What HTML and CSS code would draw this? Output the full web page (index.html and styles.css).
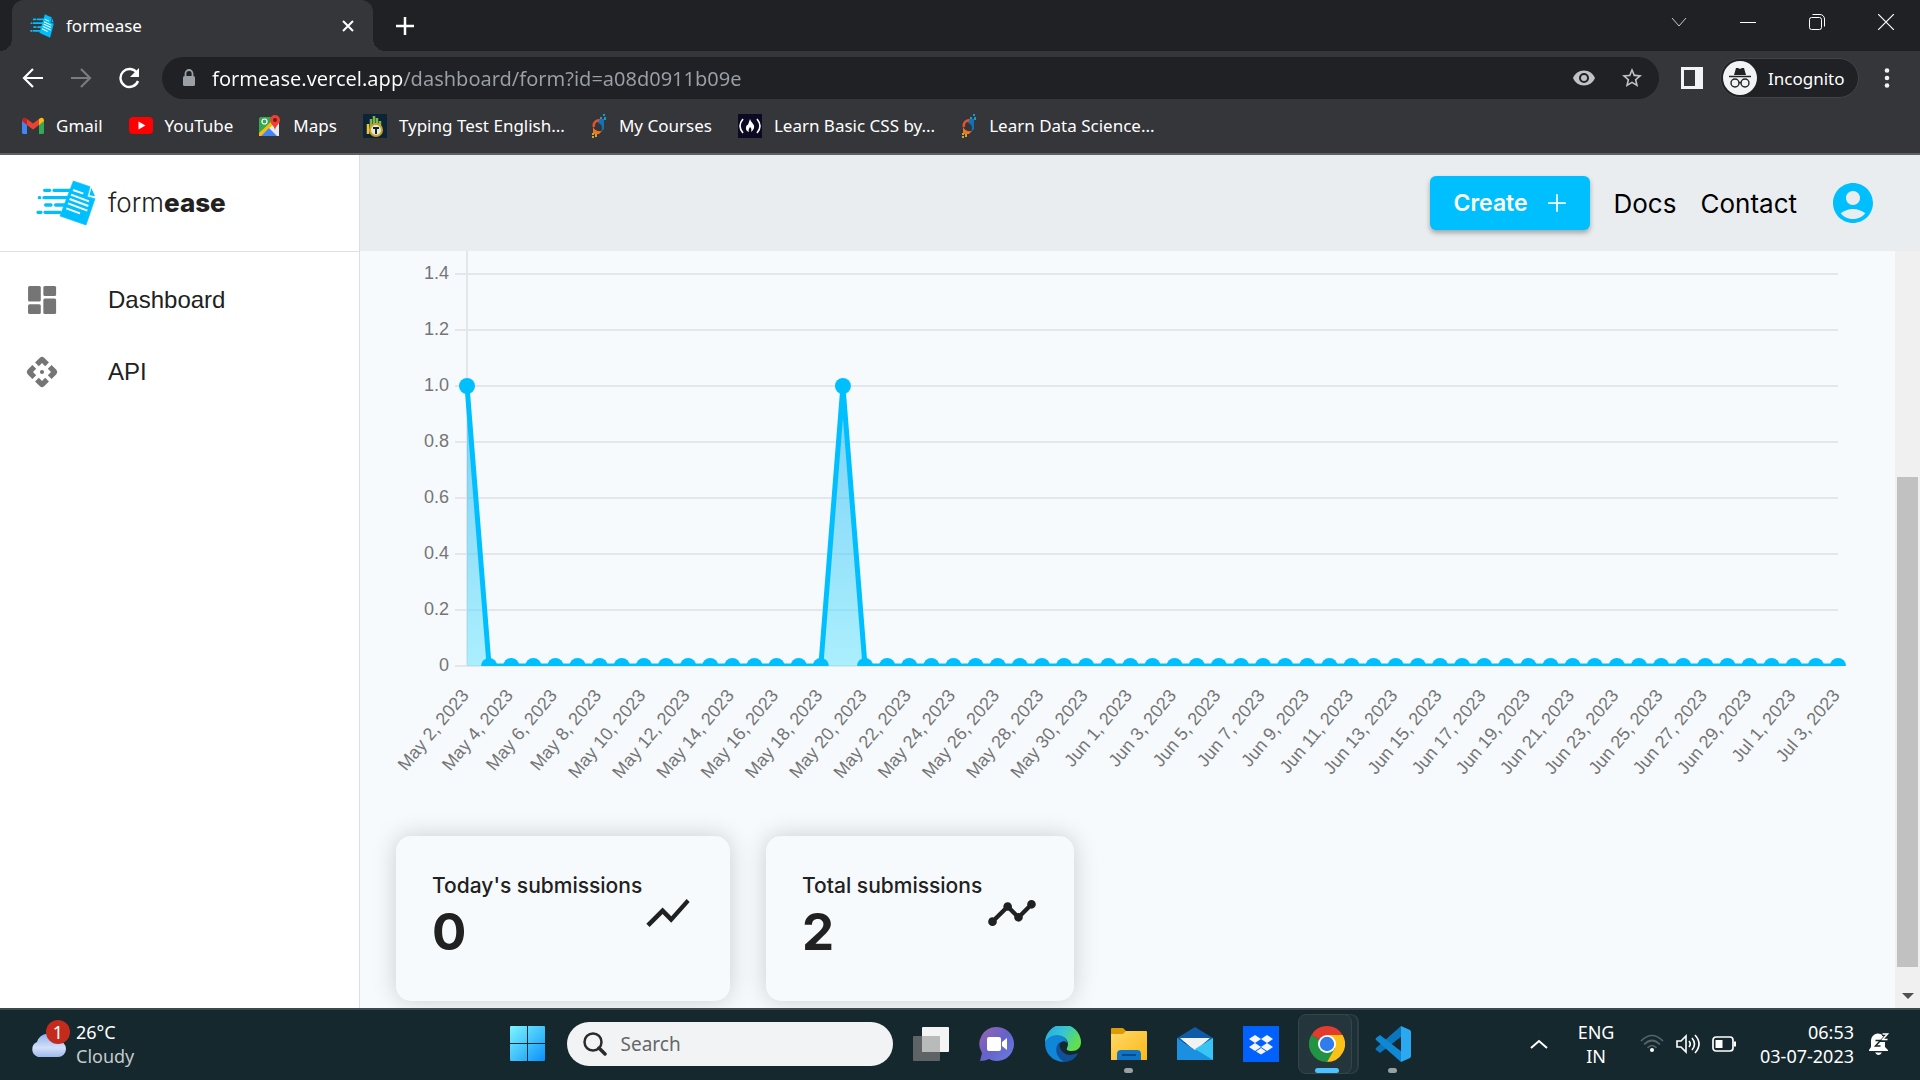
FILE: index.html
```
<!DOCTYPE html>
<html lang="en">
<head>
    <meta charset="UTF-8">
    <meta name="viewport" content="width=device-width, initial-scale=1.0">
    <title>formease</title>
    <link rel="stylesheet" href="styles.css">
</head>
<body>
    <!-- shared icons -->
    <svg class="defs" aria-hidden="true">
        <g id="logo">
            <path d="M220 93 270 110 262 140 285 146 258 225 180 198Z" fill="#00bfff" stroke="#00bfff" stroke-width="2" stroke-linejoin="round"/>
            <path d="M274 114 285 139 268 136Z" fill="#00bfff"/>
            <path d="M219 120l31 11M213 134l54 20M209 147l56 21M204 160l58 22M199 175l41 15" stroke="#fff" stroke-width="6"/>
            <path d="M134 121h15M162 121h48M118 143h1M132 143h72M137 165h16M167 165h30M114 187h9M135 187h45" stroke="#00bfff" stroke-width="10" stroke-linecap="round"/>
        </g>
        <symbol id="pi-logo" viewBox="0 0 16 24">
            <path d="M3 13a5 5 0 0 1 7-6" fill="none" stroke="#e5532d" stroke-width="2.5"/>
            <path d="M9 5h4v10l-3 3c2-5 1-8-3-9z" fill="#1272b6"/>
            <path d="M2 13c2 4 6 5 9 4l-3 3H2z" fill="#ee7623"/>
            <path d="M12 0h2v2h-2zM9 3h2v2H9zM13 3h2v3h-2z" fill="#1b9cc4"/>
            <path d="M1 19h2v2H1zM4 20h2v3H4zM1 22h2v2H1z" fill="#d9a520"/>
        </symbol>
    </svg>

    <header class="browser">
        <div class="tab-strip">
            <div class="tab">
                <svg class="tab-icon" viewBox="108 90 180 138" preserveAspectRatio="none"><use href="#logo"/></svg>
                <span>formease</span>
                <button class="tab-close" aria-label="Close tab"><svg width="12" height="12" viewBox="0 0 12 12"><path d="M1 1l10 10M11 1 1 11" stroke="#fff" stroke-width="2"/></svg></button>
            </div>
            <button class="new-tab" aria-label="New tab"><svg width="18" height="18" viewBox="0 0 18 18"><path d="M9 0v18M0 9h18" stroke="#fff" stroke-width="2.5"/></svg></button>
            <div class="window-buttons">
                <button aria-label="Search tabs"><svg width="16" height="16" viewBox="0 0 16 16"><path d="M1 4l7 8 7-8" fill="none" stroke="#ccc"/></svg></button>
                <button aria-label="Minimize"><svg width="16" height="16" viewBox="0 0 16 16"><path d="M0 8.5h16" stroke="#fff"/></svg></button>
                <button aria-label="Restore"><svg width="16" height="16" viewBox="0 0 16 16"><g fill="none" stroke="#fff"><rect x=".5" y="3.500" width="12" height="12" rx="2"/><path d="M3.500 .5H11a4.500 4.500 0 0 1 4.500 4.500v7.500"/></g></svg></button>
                <button aria-label="Close"><svg width="16" height="16" viewBox="0 0 16 16"><path d="M0 0l16 16M16 0 0 16" stroke="#fff" stroke-width="1.200"/></svg></button>
            </div>
        </div>

        <div class="toolbar">
            <div class="nav-buttons">
                <button aria-label="Back"><svg width="22" height="22" viewBox="0 0 22 22"><path d="M21 11H2M11 2 2 11l9 9" fill="none" stroke="#fff" stroke-width="2.200"/></svg></button>
                <button aria-label="Forward"><svg width="22" height="22" viewBox="0 0 22 22"><path d="M1 11h19M11 2l9 9-9 9" fill="none" stroke="#7b7c7f" stroke-width="2.200"/></svg></button>
                <button aria-label="Reload"><svg width="22" height="22" viewBox="0 0 22 22"><path d="M19 6A9 9 0 1 0 20 14" fill="none" stroke="#fff" stroke-width="2.400"/><path d="M21 1v9h-9z" fill="#fff"/></svg></button>
            </div>
            <div class="address">
                <svg width="14" height="18" viewBox="0 0 14 18"><rect x="1" y="7" width="12" height="10" rx="1.500" fill="#9aa0a6"/><path d="M3.500 8V4.500a3.500 3.500 0 0 1 7 0V8" fill="none" stroke="#9aa0a6" stroke-width="1.800"/></svg>
                <input class="url" type="text" aria-label="Address" value="formease.vercel.app/dashboard/form?id=a08d0911b09e">
                <button aria-label="Tracking protection"><svg width="24" height="24" viewBox="0 0 24 24"><path fill="#c1c2c4" fill-rule="evenodd" d="M12 4.500C7 4.500 2.730 7.610 1 12c1.730 4.390 6 7.500 11 7.500s9.270-3.110 11-7.500c-1.730-4.390-6-7.500-11-7.500zM12 17a5 5 0 1 1 0-10 5 5 0 0 1 0 10zm0-8a3 3 0 1 0 0 6 3 3 0 0 0 0-6z"/></svg></button>
                <button aria-label="Bookmark"><svg width="24" height="24" viewBox="0 0 24 24"><path fill="#c1c2c4" d="m22 9.240-7.190-.62L12 2 9.190 8.630 2 9.240l5.460 4.730L5.820 21 12 17.270 18.180 21l-1.630-7.030L22 9.240zM12 15.400l-3.760 2.270 1-4.280-3.320-2.880 4.380-.38L12 6.100l1.710 4.040 4.380.38-3.320 2.880 1 4.280L12 15.400z"/></svg></button>
            </div>
            <button class="side-panel" aria-label="Side panel"><svg width="22" height="22" viewBox="0 0 22 22"><path fill="#f1f3f4" fill-rule="evenodd" d="M0 0h22v22H0zM3 3v16h11V3z"/></svg></button>
            <button class="incognito">
                <svg width="34" height="34" viewBox="0 0 34 34"><circle cx="17" cy="17" r="17" fill="#f1f3f4"/><path d="M11 14l2-7h2l2 1 2-1h2l2 7z" fill="#202124"/><path d="M6 15.500h22" stroke="#202124" stroke-width="1.500"/><g fill="none" stroke="#202124" stroke-width="1.400"><circle cx="12" cy="22" r="4"/><circle cx="22" cy="22" r="4"/><path d="M16 22q1-1 2 0"/></g></svg>
                Incognito
            </button>
            <button class="menu" aria-label="Menu"><svg width="6" height="20" viewBox="0 0 6 20"><g fill="#f1f3f4"><circle cx="3" cy="2.500" r="2.300"/><circle cx="3" cy="10" r="2.300"/><circle cx="3" cy="17.500" r="2.300"/></g></svg></button>
        </div>

        <nav class="bookmarks">
            <a href="#"><svg width="22" height="17" viewBox="0 0 22 17"><path d="M0 3v12.500Q0 17 1.500 17H5V7z" fill="#4285f4"/><path d="M17 7v10h3.500q1.500 0 1.500-1.500V3z" fill="#34a853"/><path d="M17 2v6l5-4V3q-1-4-5-1z" fill="#fbbc04"/><path d="M5 2v6L0 4V3q1-4 5-1z" fill="#c5221f"/><path d="M5 2l6 4.500L17 2v6l-6 4.500L5 8z" fill="#ea4335"/></svg>Gmail</a>
            <a href="#"><svg width="24" height="17" viewBox="0 0 24 17"><rect width="24" height="17" rx="4" fill="red"/><path d="M9.500 4.500v8l7-4z" fill="#fff"/></svg>YouTube</a>
            <a href="#"><svg width="22" height="22" viewBox="0 0 22 22"><rect y="2" width="20" height="19" rx="2" fill="#34a853"/><path d="M0 21 18 3h2v18z" fill="#e8eaed"/><path d="M0 18 15 4l3 2L2 21H0z" fill="#fbbc04"/><path d="M2 21l8-8 8 8z" fill="#4285f4"/><circle cx="5.500" cy="6.500" r="2.500" fill="none" stroke="#fff" stroke-width="1.200"/><path d="M16 0a5 5 0 0 0-5 5c0 4 4 5 5 10 1-5 5-6 5-10a5 5 0 0 0-5-5z" fill="#ea4335"/><circle cx="16" cy="5" r="2" fill="#811411"/></svg>Maps</a>
            <a href="#"><svg width="24" height="24" viewBox="0 0 24 24"><path fill="#0b2536" d="M0 0h24v24H0z"/><path d="M8 5v9M11 2v10M14 4v9M17 7v7" stroke="#7ab648" stroke-width="2.500"/><path d="M5 10v10" stroke="#f4c430" stroke-width="2.500"/><circle cx="13" cy="16" r="6" fill="#e5e8df" stroke="#c9a227" stroke-width="2"/><path d="M10 14h6M13 13v7" stroke="#14222c" stroke-width="2"/></svg>Typing Test English...</a>
            <a href="#"><svg width="16" height="24"><use href="#pi-logo"/></svg>My Courses</a>
            <a href="#"><svg width="24" height="24" viewBox="0 0 24 24"><path fill="#0a0a23" d="M0 0h24v24H0z"/><path d="M5 5q-6 7 0 14M19 5q6 7 0 14" fill="none" stroke="#fff" stroke-width="1.600"/><path d="M12 5c1 4 5 5 4 9-.5 2-2 3-3 4 1-3 0-4-1-5-1 2-2 3-1 5-3-1-4-4-2-7 1 1 2-3 3-6z" fill="#fff"/></svg>Learn Basic CSS by...</a>
            <a href="#"><svg width="16" height="24"><use href="#pi-logo"/></svg>Learn Data Science...</a>
        </nav>
    </header>

    <div class="app">
        <aside class="sidebar">
            <a class="brand" href="#">
                <svg class="brand-logo" viewBox="108 90 180 138"><use href="#logo"/></svg>
                <span class="brand-name">form<b>ease</b></span>
            </a>
            <nav class="side-nav">
                <a href="#"><svg width="36" height="36" viewBox="0 0 24 24" fill="#757575"><rect x="2.700" y="2.700" width="8.500" height="10.300" rx="1"/><rect x="12.900" y="2.700" width="8.500" height="6.600" rx="1"/><rect x="2.700" y="14.900" width="8.500" height="6.500" rx="1"/><rect x="12.900" y="11" width="8.500" height="10.400" rx="1"/></svg>Dashboard</a>
                <a href="#"><svg width="36" height="36" viewBox="0 0 24 24" fill="#757575"><circle cx="12" cy="12" r="1.400"/><path id="arm" d="M12 6l2.120 2.120 2.500-2.500-3.200-3.200q-1.420-1.200-2.840 0L7.380 5.620l2.500 2.500z"/><use href="#arm" transform="rotate(90 12 12)"/><use href="#arm" transform="rotate(180 12 12)"/><use href="#arm" transform="rotate(270 12 12)"/></svg>API</a>
            </nav>
        </aside>

        <div class="main">
            <header class="topbar">
                <button class="create">Create
                    <svg width="30" height="30" viewBox="0 0 24 24"><path fill="#fff" d="M19 12.700h-6.300V19h-1.400v-6.300H5v-1.400h6.300V5h1.400v6.300H19z"/></svg>
                </button>
                <a href="#">Docs</a>
                <a href="#">Contact</a>
                <button class="account" aria-label="Account"><svg width="48" height="48" viewBox="0 0 24 24"><path fill="#00bfff" d="M12 2C6.480 2 2 6.480 2 12s4.480 10 10 10 10-4.480 10-10S17.520 2 12 2zm0 4c1.930 0 3.500 1.570 3.500 3.500S13.930 13 12 13s-3.500-1.570-3.500-3.500S10.070 6 12 6zm0 14c-2.030 0-4.430-.82-6.140-2.880C7.550 15.800 9.680 15 12 15s4.450.8 6.140 2.120C16.430 19.180 14.030 20 12 20z"/></svg></button>
            </header>

            <div class="scroll-area">
                <main class="content">
                    <svg id="chart" class="chart" viewBox="0 0 1535 561" role="img" aria-label="Submissions per day">
                        <defs>
                            <linearGradient id="fill" gradientUnits="userSpaceOnUse" x1="0" y1="135" x2="0" y2="415">
                                <stop offset="0" stop-color="#00a8ee"/>
                                <stop offset="1" stop-color="#60e4ff"/>
                            </linearGradient>
                            <clipPath id="plot"><path d="M90 0h1400v415H90z"/></clipPath>
                        </defs>
                    </svg>

                    <section class="cards">
                        <article class="card">
                            <div>
                                <h2>Today's submissions</h2>
                                <p>0</p>
                            </div>
                            <svg width="52" height="52" viewBox="0 0 24 24"><path fill="#212121" d="m3.500 18.490 6-6.010 4 4L22 6.920l-1.410-1.410-7.090 7.970-4-4L2 16.990z"/></svg>
                        </article>
                        <article class="card card-total">
                            <div>
                                <h2>Total submissions</h2>
                                <p>2</p>
                            </div>
                            <svg width="52" height="52" viewBox="0 0 24 24"><path fill="#212121" d="M23 8c0 1.100-.9 2-2 2-.18 0-.35-.02-.51-.07l-3.560 3.550c.05.16.07.34.07.52 0 1.100-.9 2-2 2s-2-.9-2-2c0-.18.02-.36.07-.52l-2.550-2.550c-.16.05-.34.07-.52.07s-.36-.02-.52-.07l-4.550 4.560c.05.16.07.33.07.51 0 1.100-.9 2-2 2s-2-.9-2-2 .9-2 2-2c.18 0 .35.02.51.07l4.560-4.550C8.020 9.360 8 9.180 8 9c0-1.100.9-2 2-2s2 .9 2 2c0 .18-.02.36-.07.52l2.550 2.550c.16-.05.34-.07.52-.07s.36.02.52.07l3.550-3.560C19.020 8.350 19 8.180 19 8c0-1.100.9-2 2-2s2 .9 2 2z"/></svg>
                        </article>
                    </section>
                </main>
                <div class="scrollbar">
                    <div class="thumb"></div>
                    <svg width="12" height="6" viewBox="0 0 12 6"><path d="M0 0h12L6 6z" fill="#505050"/></svg>
                </div>
            </div>
        </div>
    </div>

    <footer class="taskbar">
        <button class="weather">
            <span class="weather-icon">
                <svg width="36" height="25" viewBox="0 0 36 25"><defs><linearGradient id="cloud" x1="0" y1="0" x2="0" y2="1"><stop offset="0" stop-color="#8db0ee"/><stop offset=".6" stop-color="#d3e0f8"/><stop offset="1" stop-color="#9db9ec"/></linearGradient></defs><path d="M8 25a8 8 0 0 1-1-15A11 11 0 0 1 28 9a8 8 0 0 1 0 16z" fill="url(#cloud)"/></svg>
                <span class="badge">1</span>
            </span>
            <span class="lines"><span>26°C</span><span class="dim">Cloudy</span></span>
        </button>

        <div class="apps">
            <button class="app-button" aria-label="Start"><svg width="36" height="36" viewBox="0 0 36 36"><defs><linearGradient id="win" x1="0" y1="0" x2="1" y2="1"><stop offset="0" stop-color="#7df5ff"/><stop offset=".5" stop-color="#44c4fb"/><stop offset="1" stop-color="#0a90fb"/></linearGradient></defs><path fill="url(#win)" d="M1 0h16v17H0V1q0-1 1-1zM18 0h16q1 0 1 1v16H18zM0 18h17v17H1q-1 0-1-1zM18 18h17v16q0 1-1 1H18z"/></svg></button>
            <label class="search">
                <svg width="24" height="24" viewBox="0 0 24 24" fill="none" stroke="#2b2b2b"><circle cx="10" cy="10" r="8.500" stroke-width="2.500"/><path d="M16 16l6 6" stroke-width="3.500" stroke-linecap="round"/></svg>
                <input type="text" placeholder="Search" aria-label="Search">
            </label>
            <button class="app-button" aria-label="Task view"><svg width="36" height="34" viewBox="0 0 36 34"><rect x="9" width="27" height="25" rx="1" fill="#f4f4f4"/><rect y="9" width="27" height="25" rx="1" fill="#5e6365"/><path d="M9 9h18v16H9z" fill="#b9bbbb"/></svg></button>
            <button class="app-button" aria-label="Chat"><svg width="36" height="36" viewBox="0 0 36 36"><defs><linearGradient id="chat" x1="0" y1="0" x2="1" y2="1"><stop offset="0" stop-color="#9c64ae"/><stop offset=".5" stop-color="#6562c9"/><stop offset="1" stop-color="#6a7fe0"/></linearGradient></defs><path d="M18 1a17 17 0 1 1-8 32q-4 2-9 2l2-8A17 17 0 0 1 18 1z" fill="url(#chat)"/><rect x="8" y="11" width="14" height="14" rx="2" fill="#fff"/><path d="M23 16l5-4v12l-5-4z" fill="#fff"/></svg></button>
            <button class="app-button" aria-label="Edge"><svg width="36" height="36" viewBox="0 0 36 36"><defs><linearGradient id="edge-top" x1="0" y1="0" x2="1" y2=".5"><stop offset="0" stop-color="#27a6de"/><stop offset=".5" stop-color="#35c4d6"/><stop offset="1" stop-color="#62e04c"/></linearGradient></defs><path d="M0 17a18 18 0 0 1 36-1c0 6-4 9-9 9-4 0-6-1-5-3 3-5-1-12-8-12S2 13 0 17z" fill="url(#edge-top)"/><path d="M0 18c1-6 7-9 12-9 6 0 10 4 10 8-2-3-6-2-8 1-4 7 1 15 9 17A18 18 0 0 1 0 18z" fill="#0f86d8"/><path d="M15 16c-6 4-5 15 4 20 7 0 12-4 14-9-5 2-10 3-14 0-4-3-5-7-4-11z" fill="#114f97"/></svg></button>
            <button class="app-button running" aria-label="File Explorer"><svg width="36" height="36" viewBox="0 0 36 36"><defs><linearGradient id="folder" x1="0" y1="0" x2="1" y2="1"><stop offset="0" stop-color="#ffd968"/><stop offset="1" stop-color="#fbb917"/></linearGradient></defs><path d="M1 2h11l3 3v5H0V3q0-1 1-1z" fill="#dd9a05"/><path d="M0 8h12l3-3h20q1 0 1 1v28H0z" fill="url(#folder)"/><path d="M6 34V28q0-4 4-4h16q4 0 4 4v6z" fill="#0f74c5"/><path d="M11 29h14" stroke="#0a4a86" stroke-width="2"/></svg></button>
            <button class="app-button" aria-label="Mail"><svg width="36" height="36" viewBox="0 0 36 36"><path d="M0 12 18 1l18 11v4H0z" fill="#0f5ba8"/><path d="M3 12h30L18 25z" fill="#f2f2f2"/><path d="M0 12l18 12 18-12v22H0z" fill="#1c90e0"/><path d="M4 12h28L18 23z" fill="#f2f2f2"/><path d="M36 12v22L18 23z" fill="#37c6f4"/></svg></button>
            <button class="app-button" aria-label="Dropbox"><svg width="36" height="36" viewBox="0 0 36 36"><path fill="#0061ff" d="M0 0h36v36H0z"/><path fill="#f7f5f2" d="M12 9l6 4-6 4-6-4zM24 9l6 4-6 4-6-4zM12 17l6 4-6 4-6-4zM24 17l6 4-6 4-6-4zM18 22l5 3.500-5 3-5-3z"/></svg></button>
            <button class="app-button active" aria-label="Chrome"><svg width="36" height="36" viewBox="0 0 36 36"><path d="M18 18 2.400 9a18 18 0 0 1 31.200 0z" fill="#e33b2e"/><path d="M18 18 2.400 9A18 18 0 0 0 18 36l8-13z" fill="#229342"/><path d="M18 9h15.600A18 18 0 0 1 18 36l8-14z" fill="#fbc116"/><circle cx="18" cy="18" r="9" fill="#fff"/><circle cx="18" cy="18" r="7.200" fill="#2f7ced"/></svg></button>
            <button class="app-button running" aria-label="Visual Studio Code"><svg width="36" height="36" viewBox="0 0 36 36"><path d="M26 0l1 10L5 27l-4-3q-1-1 0-2z" fill="#0a76bd"/><path d="M1 12l4-3 22 17-1 10L1 14q-1-1 0-2z" fill="#1088d4"/><path d="M26 0l9 4q1 1 1 2v24q0 1-1 2l-9 4z" fill="#2ba9f0"/></svg></button>
        </div>

        <div class="tray">
            <button aria-label="Show hidden icons"><svg width="18" height="10" viewBox="0 0 18 10"><path d="M1 9l8-7 8 7" fill="none" stroke="#fff" stroke-width="2"/></svg></button>
            <button class="lines language"><span>ENG</span><span>IN</span></button>
            <button class="status" aria-label="Network, sound and battery">
                <svg width="24" height="20" viewBox="0 0 24 20" fill="none" stroke="#566468" stroke-width="1.700"><path d="M1 7q11-11 22 0M4 10.500q8-8 16 0M7.500 14q4.500-5 9 0"/><circle cx="12" cy="16" r="2" fill="#fff" stroke="none"/></svg>
                <svg width="24" height="20" viewBox="0 0 24 20" fill="none" stroke="#fff" stroke-width="1.600"><path d="M1 7h4l5-5v16l-5-5H1z"/><path d="M13 7q2.500 3 0 6M16 4q5 6 0 12M19 1q8 9 0 18"/></svg>
                <svg width="24" height="16" viewBox="0 0 24 16"><rect x="1" y="1" width="20" height="14" rx="3" fill="none" stroke="#fff" stroke-width="1.700"/><path d="M3.500 4h7v8h-7zM22 5.500h2v5h-2z" fill="#fff"/></svg>
            </button>
            <button class="lines clock"><span>06:53</span><span>03-07-2023</span></button>
            <button aria-label="Notifications"><svg width="22" height="24" viewBox="0 0 22 24"><path d="M1 18l2-3V9a7 7 0 0 1 14-1v7l3 3v1H1zM7 20.500h7q-3.500 5-7 0z" fill="#fff"/><path d="M14 2h6l-5 6h5" fill="none" stroke="#15282e" stroke-width="4"/><path d="M14.500 2h5l-5 5.500h5" fill="none" stroke="#fff" stroke-width="1.500"/><path d="M7.500 8.500h5l-5 5.500h5" fill="none" stroke="#15282e" stroke-width="1.500"/></svg></button>
        </div>
    </footer>

    <script>
        const chart = document.getElementById('chart');
        const LEFT = 107, RIGHT = 1478, BASE = 415, UNIT = 280;
        const start = new Date(2023, 4, 2);
        const submissions = new Array(63).fill(0);
        submissions[0] = 1;
        submissions[17] = 1;

        const step = (RIGHT - LEFT) / (submissions.length - 1);
        const px = i => LEFT + i * step;
        const py = v => BASE - v * UNIT;

        function add(tag, attrs, text) {
            const el = document.createElementNS('http://www.w3.org/2000/svg', tag);
            for (const key in attrs) el.setAttribute(key, attrs[key]);
            if (text !== undefined) el.textContent = text;
            chart.appendChild(el);
        }

        // y axis
        for (let i = 0; i <= 7; i++) {
            const y = py(i / 5);
            add('path', { class: 'grid', d: `M95 ${y}H${RIGHT}` });
            add('text', { class: 'tick', x: 89, y: y + 5 }, i === 0 ? '0' : (i / 5).toFixed(1));
        }
        add('path', { class: 'grid', d: `M${LEFT} 0V${BASE}` });

        // x axis, every second day
        for (let i = 0; i < submissions.length; i += 2) {
            const day = new Date(start);
            day.setDate(start.getDate() + i);
            const label = day.toLocaleDateString('en-US', { month: 'short', day: 'numeric', year: 'numeric' });
            add('text', { class: 'tick', transform: `translate(${px(i) - 2} 441) rotate(-50)`, y: 6 }, label);
        }

        // series
        const points = submissions.map((v, i) => `${px(i)} ${py(v)}`).join('L');
        add('path', { class: 'area', d: `M${points}L${RIGHT} ${BASE}L${LEFT} ${BASE}Z` });
        add('path', { class: 'line', d: `M${points}` });
        submissions.forEach((v, i) => add('circle', { class: 'dot', cx: px(i), cy: py(v), r: 8 }));
    </script>
</body>
</html>
```
FILE: styles.css
```
* {
    box-sizing: border-box;
}

body {
    margin: 0;
    height: 100vh;
    display: flex;
    flex-direction: column;
    overflow: hidden;
    font-family: "Noto Sans", "Open Sans", sans-serif;
    color: #212121;
}

a {
    color: inherit;
    text-decoration: none;
}

button {
    padding: 0;
    border: none;
    background: none;
    color: inherit;
    font: inherit;
    cursor: pointer;
}

svg {
    display: block;
    flex-shrink: 0;
}

.defs {
    position: absolute;
    width: 0;
    height: 0;
}

/* browser window */
.browser {
    background-color: #35363a;
    border-bottom: 2px solid #5f6064;
    color: #fff;
    font-size: 17px;
}

.tab-strip {
    display: flex;
    align-items: center;
    height: 51px;
    padding-left: 12px;
    background-color: #202124;
}

.tab {
    position: relative;
    display: flex;
    align-items: center;
    gap: 12px;
    width: 361px;
    height: 51px;
    padding: 0 19px 0 18px;
    background-color: #35363a;
    border-radius: 12px 12px 0 0;
}

.tab::before,
.tab::after {
    content: "";
    position: absolute;
    bottom: 0;
    width: 12px;
    height: 12px;
}

.tab::before {
    right: 100%;
    background: radial-gradient(circle at 0 0, #202124 12px, #35363a 12px);
}

.tab::after {
    left: 100%;
    background: radial-gradient(circle at 100% 0, #202124 12px, #35363a 12px);
}

.tab-icon {
    width: 24px;
    height: 24px;
}

.tab-close {
    margin-left: auto;
}

.new-tab {
    margin-left: 23px;
}

.window-buttons {
    display: flex;
    align-self: flex-start;
    margin-left: auto;
}

.window-buttons button {
    display: grid;
    place-items: center;
    width: 69px;
    height: 43px;
}

.toolbar {
    display: flex;
    align-items: center;
    height: 51px;
    padding: 3px 30px 0 22px;
}

.nav-buttons {
    display: flex;
    gap: 26px;
    margin-right: 22px;
}

.address {
    flex: 1;
    display: flex;
    align-items: center;
    gap: 24px;
    height: 42px;
    margin-right: 22px;
    padding: 0 15px 0 20px;
    background-color: #202124;
    border-radius: 21px;
}

.url {
    flex: 1;
    min-width: 0;
    margin-left: -8px;
    padding: 0;
    border: none;
    outline: none;
    font: 20px "Noto Sans", "Open Sans", sans-serif;
    background: linear-gradient(90deg, #fff 191px, #9aa0a6 191px);
    -webkit-background-clip: text;
    background-clip: text;
    color: transparent;
}

.side-panel {
    margin-right: 17px;
}

.incognito {
    display: flex;
    align-items: center;
    gap: 11px;
    height: 40px;
    width: 139px;
    margin-right: 25px;
    padding-left: 2px;
    background-color: #202124;
    border: 1px solid #424347;
    border-radius: 20px;
}

.bookmarks {
    display: flex;
    align-items: center;
    gap: 26px;
    height: 51px;
    padding: 0 22px 4px;
}

.bookmarks a {
    display: flex;
    align-items: center;
    gap: 12px;
}

/* formease page */
.app {
    flex: 1;
    min-height: 0;
    display: flex;
    font-family: "Liberation Sans", Arial, sans-serif;
}

.sidebar {
    width: 360px;
    border-right: 1px solid #dcdfe1;
    background-color: #fff;
}

.brand {
    display: flex;
    align-items: center;
    gap: 12px;
    height: 97px;
    padding-left: 36px;
    border-bottom: 1px solid #e0e0e0;
}

.brand-logo {
    width: 60px;
    height: 46px;
}

.brand-name {
    font: 300 26px/36px Inter, sans-serif;
}

.brand-name b {
    font-weight: 800;
}

.side-nav {
    padding-top: 12px;
    font-size: 24px;
}

.side-nav a {
    display: flex;
    align-items: center;
    gap: 48px;
    height: 72px;
    padding-left: 24px;
}

.main {
    flex: 1;
    min-width: 0;
    display: flex;
    flex-direction: column;
}

.topbar {
    display: flex;
    align-items: center;
    justify-content: flex-end;
    gap: 24px;
    height: 96px;
    padding-right: 43px;
    background-color: #e9edf0;
    color: #000;
    font: 26px Inter, sans-serif;
}

.create {
    display: flex;
    align-items: center;
    justify-content: space-between;
    width: 160px;
    height: 54px;
    padding: 0 18px 0 24px;
    border-radius: 6px;
    background-color: #00bfff;
    box-shadow: 0 3px 5px rgba(0, 0, 0, 0.3);
    color: #fff;
    font-size: 23px;
    font-weight: 600;
}

.account {
    margin-left: 8px;
}

.scroll-area {
    flex: 1;
    min-height: 0;
    display: flex;
}

.content {
    flex: 1;
    min-width: 0;
    overflow: hidden;
    background-color: #f6fafd;
}

.chart {
    width: 100%;
}

.grid {
    stroke: #e3e7e9;
    stroke-width: 2;
}

.tick {
    fill: #757575;
    font-size: 18px;
    text-anchor: end;
}

.area {
    fill: url(#fill);
    fill-opacity: 0.5;
}

.line {
    fill: none;
    stroke: #00bfff;
    stroke-width: 5;
    stroke-linejoin: round;
    clip-path: url(#plot);
}

.dot {
    fill: #00bfff;
    clip-path: url(#plot);
}

.cards {
    display: flex;
    gap: 36px;
    padding: 24px 36px;
}

.card {
    display: flex;
    justify-content: space-between;
    width: 334px;
    height: 165px;
    padding: 36px;
    border-radius: 15px;
    background-color: #f6fafd;
    box-shadow: 0 0 24px rgba(0, 0, 0, 0.18);
    font-family: Inter, sans-serif;
}

.card > div {
    width: 0;
}

.card-total {
    width: 308px;
}

.card svg {
    margin-top: 15px;
}

.card h2 {
    margin: 0;
    font-size: 21px;
    font-weight: 500;
    line-height: 28px;
    white-space: nowrap;
}

.card p {
    margin: 0;
    font-size: 51px;
    font-weight: 700;
    line-height: 64px;
}

.scrollbar {
    width: 25px;
    display: flex;
    flex-direction: column;
    align-items: center;
    justify-content: flex-end;
    gap: 26px;
    padding-bottom: 9px;
    background-color: #f0f0f0;
}

.thumb {
    width: 21px;
    height: 65.5%;
    background-color: #c1c1c1;
}

/* windows taskbar */
.taskbar {
    display: grid;
    grid-template-columns: 1fr auto 1fr;
    align-items: center;
    height: 72px;
    padding: 0 30px 2px;
    border-top: 2px solid #3c494c;
    background-color: #15282e;
    color: #fff;
    font-size: 18px;
}

.weather {
    display: flex;
    gap: 10px;
    justify-self: start;
    align-items: center;
    text-align: left;
}

.weather-icon {
    position: relative;
}

.badge {
    position: absolute;
    top: -12px;
    left: 16px;
    width: 24px;
    height: 24px;
    border-radius: 50%;
    background-color: #c42b1c;
    line-height: 24px;
    text-align: center;
}

.lines {
    display: flex;
    flex-direction: column;
    line-height: 24px;
}

.dim {
    color: #c5cacc;
}

.apps {
    display: flex;
    align-items: center;
}

.app-button {
    position: relative;
    display: grid;
    place-items: center;
    width: 66px;
    height: 60px;
}

.running::after,
.active::after {
    content: "";
    position: absolute;
    bottom: 1px;
    left: 50%;
    width: 9px;
    height: 5px;
    margin-left: -5px;
    border-radius: 3px;
    background-color: #98a0a2;
}

.active::after {
    width: 24px;
    margin-left: -12px;
    background-color: #4cc2ff;
}

.active::before {
    content: "";
    position: absolute;
    inset: 0 8px 0 4px;
    border: 1px solid #35464b;
    border-radius: 8px;
    background-color: #24363c;
    box-shadow: 6px 0 0 -1px #1d3036, 7px 0 0 #2c3d43;
}

.active svg {
    position: relative;
}

.search {
    display: flex;
    align-items: center;
    gap: 14px;
    width: 326px;
    height: 44px;
    margin: 0 5px 0 6px;
    padding: 0 16px;
    border-radius: 22px;
    background-color: #f1f3f4;
}

.search input {
    flex: 1;
    min-width: 0;
    padding: 0;
    border: none;
    outline: none;
    background: none;
    font: 19px "Noto Sans", "Open Sans", sans-serif;
}

.search input::placeholder {
    color: #666;
}

.tray {
    display: flex;
    align-items: center;
    justify-self: end;
}

.language {
    width: 60px;
    margin: 0 14px 0 18px;
    align-items: center;
}

.status {
    display: flex;
    align-items: center;
    gap: 12px;
    margin-right: 24px;
}

.clock {
    align-items: flex-end;
    margin-right: 14px;
}
```
